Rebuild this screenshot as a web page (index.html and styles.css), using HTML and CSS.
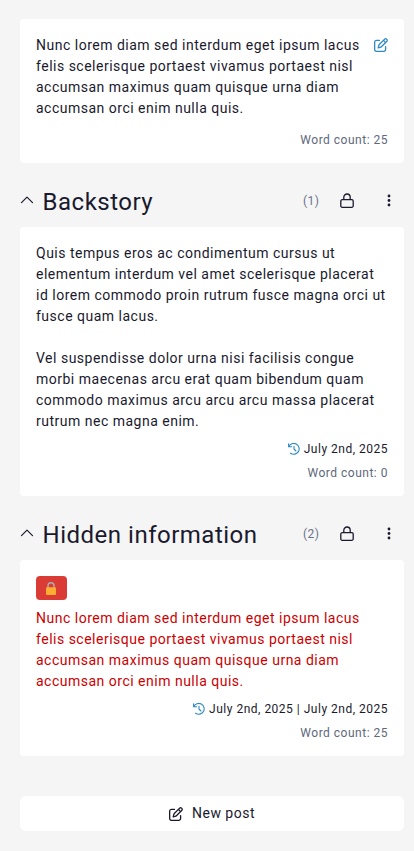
FILE: index.html
```html
<!DOCTYPE html>
<html lang="en">
<head>
<meta charset="utf-8">
<title>Posts</title>
<link rel="stylesheet" href="styles.css">
</head>
<body>
<svg width="0" height="0" class="defs">
  <symbol id="edit" viewBox="0 0 512 512"><path fill="currentColor" d="M441 58.9L453.1 71c9.4 9.4 9.4 24.6 0 33.9L424 134.1 377.9 88 407 58.9c9.4-9.4 24.6-9.4 33.9 0zM209.8 256.2L344 121.9 390.1 168 255.8 302.2c-2.9 2.9-6.5 5-10.4 6.1l-58.5 16.7 16.7-58.5c1.1-3.9 3.2-7.5 6.1-10.4zM373.1 25L175.8 222.2c-8.7 8.7-15 19.4-18.3 31.1l-28.6 100c-2.4 8.4-.1 17.4 6.1 23.6s15.2 8.5 23.6 6.1l100-28.6c11.8-3.4 22.5-9.7 31.1-18.3L487 138.9c28.1-28.1 28.1-73.7 0-101.8L474.9 25C446.8-3.1 401.2-3.1 373.1 25zM88 64C39.4 64 0 103.4 0 152L0 424c0 48.6 39.4 88 88 88l272 0c48.6 0 88-39.4 88-88l0-112c0-13.3-10.7-24-24-24s-24 10.7-24 24l0 112c0 22.1-17.9 40-40 40L88 464c-22.1 0-40-17.9-40-40l0-272c0-22.1 17.9-40 40-40l112 0c13.3 0 24-10.7 24-24s-10.7-24-24-24L88 64z"/></symbol>
  <symbol id="history" viewBox="0 0 12 12"><path fill="none" stroke="currentColor" stroke-width="1.1" stroke-linecap="round" stroke-linejoin="round" d="M.6 .8v3h3M.8 3.7A5.4 5.4 0 1 1 2.6 10.2M6 3.2V6l1.9 2"/></symbol>
  <symbol id="lock" viewBox="0 0 14 16"><path fill="none" stroke="currentColor" stroke-width="1.3" d="M3.8 6.5V4.2a3.200 3.200 0 0 1 6.400 0v2.3M2.2 6.7h9.6a1.4 1.4 0 0 1 1.4 1.4v4.8a1.4 1.4 0 0 1-1.4 1.4H2.2a1.4 1.4 0 0 1-1.4-1.4V8.100a1.4 1.4 0 0 1 1.4-1.4z"/></symbol>
  <symbol id="chevron" viewBox="0 0 14 8"><path fill="none" stroke="currentColor" stroke-width="1.2" stroke-linecap="round" stroke-linejoin="round" d="M1.500 6.700 7 1.200l5.500 5.500"/></symbol>
  <symbol id="dots" viewBox="0 0 4 14"><g fill="currentColor"><circle cx="2" cy="2" r="1.400"/><circle cx="2" cy="6.500" r="1.400"/><circle cx="2" cy="11" r="1.400"/></g></symbol>
</svg>
<main class="page">
  <article class="card">
    <div class="card-top">
      <p>Nunc lorem diam sed interdum eget ipsum lacus felis scelerisque portaest vivamus portaest nisl accumsan maximus quam quisque urna diam accumsan orci enim nulla quis.</p>
      <svg class="icon-edit blue"><use href="#edit"/></svg>
    </div>
    <div class="meta count first-count">Word count: 25</div>
  </article>

  <header class="section-head">
    <svg class="icon-chevron"><use href="#chevron"/></svg>
    <h2>Backstory</h2>
    <span class="number">(1)</span>
    <svg class="icon-lock"><use href="#lock"/></svg>
    <svg class="icon-dots"><use href="#dots"/></svg>
  </header>
  <article class="card">
    <p>Quis tempus eros ac condimentum cursus ut elementum interdum vel amet scelerisque placerat id lorem commodo proin rutrum fusce magna orci ut fusce quam lacus.</p>
    <p class="next">Vel suspendisse dolor urna nisi facilisis congue morbi maecenas arcu erat quam bibendum quam commodo maximus arcu arcu arcu massa placerat rutrum nec magna enim.</p>
    <div class="meta date"><svg class="icon-history blue"><use href="#history"/></svg>July 2nd, 2025</div>
    <div class="meta count">Word count: 0</div>
  </article>

  <header class="section-head">
    <svg class="icon-chevron"><use href="#chevron"/></svg>
    <h2>Hidden information</h2>
    <span class="number">(2)</span>
    <svg class="icon-lock"><use href="#lock"/></svg>
    <svg class="icon-dots"><use href="#dots"/></svg>
  </header>
  <article class="card">
    <div class="badge"><svg class="padlock" viewBox="0 0 10 13"><path d="M2 6V3.800a3 3 0 0 1 6 0V6" fill="none" stroke="#aab0b5" stroke-width="1.400"/><rect y="5.200" width="10" height="7.800" rx="1" fill="#ffac33"/></svg></div>
    <p class="hidden-text">Nunc lorem diam sed interdum eget ipsum lacus felis scelerisque portaest vivamus portaest nisl accumsan maximus quam quisque urna diam accumsan orci enim nulla quis.</p>
    <div class="meta date"><svg class="icon-history blue"><use href="#history"/></svg>July 2nd, 2025 | July 2nd, 2025</div>
    <div class="meta count">Word count: 25</div>
  </article>

  <button class="new-post"><svg class="icon-edit"><use href="#edit"/></svg>New post</button>
</main>
</body>
</html>
```
FILE: styles.css
```css
* { box-sizing: border-box; }
body {
  margin: 0;
  background: #f5f5f5;
  color: #1a1a2e;
  font: 14px/21px Roboto, sans-serif;
  letter-spacing: 0.5px;
}
svg { flex: none; display: block; }
.defs { position: absolute; }
.page { padding: 19px 10px 20px 20px; }
.card {
  background: #fff;
  border-radius: 4px;
  padding: 16px 16px 11px;
}
p { margin: 0; }
.card-top { display: flex; justify-content: space-between; }
.card-top p { width: 330px; }
.card-top .icon-edit { margin-top: 3px; }
.card-top .blue { margin-right: 0.5px; }
.next { margin-top: 21px; }
.meta {
  display: flex;
  justify-content: flex-end;
  align-items: center;
  height: 24px;
  font-size: 12px;
}
.date { margin-top: 5px; gap: 4px; }
.count { color: #60687c; }
.first-count { margin-top: 9px; }
.section-head {
  display: flex;
  align-items: center;
  height: 64px;
  padding: 13px 13px 0 0;
}
h2 {
  flex: 1;
  margin: 0 0 0 8.6px;
  font-size: 24px;
  line-height: 32px;
  font-weight: 400;
}
.number { font-size: 12px; color: #6b7389; }
.blue { color: #2e8bc0; }
.icon-edit { width: 14px; height: 14px; }
.icon-history { width: 12px; height: 12px; }
.icon-chevron { width: 14px; height: 8px; margin-top: -3px; }
.icon-lock { width: 14px; height: 16px; margin: -1px 40.5px 0 20px; }
.icon-dots { width: 4px; height: 14px; margin: -1px 0 0 -7px; }
.badge {
  display: flex;
  align-items: center;
  justify-content: center;
  width: 31px;
  height: 24px;
  margin-bottom: 8px;
  border-radius: 4px;
  background: #db3b35;
}
.padlock { width: 10px; height: 13px; margin-right: 1px; }
.hidden-text { color: #cc0000; }
.new-post {
  display: flex;
  align-items: center;
  justify-content: center;
  gap: 9px;
  width: 100%;
  height: 35px;
  margin-top: 40px;
  padding: 0;
  border: 0;
  border-radius: 6px;
  background: #fff;
  color: inherit;
  font: inherit;
  letter-spacing: inherit;
}
```
